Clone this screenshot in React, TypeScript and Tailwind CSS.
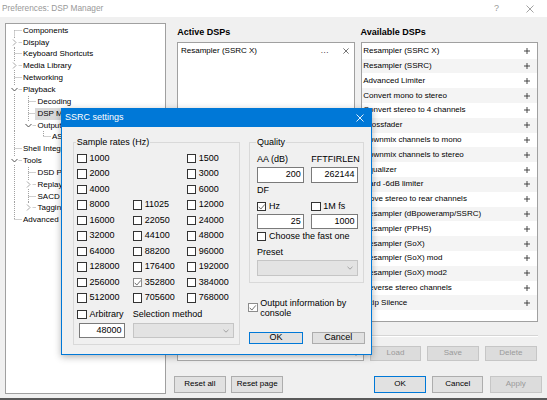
import React from "react";

type Conn = "F" | "T" | "L" | "I" | " ";

interface TreeItem {
  label: string;
  cols: Conn[];
  toggle?: "open" | "closed";
  selected?: boolean;
}

const TREE: TreeItem[] = [
  { label: "Components", cols: ["F"] },
  { label: "Display", cols: ["T"], toggle: "closed" },
  { label: "Keyboard Shortcuts", cols: ["T"] },
  { label: "Media Library", cols: ["T"], toggle: "closed" },
  { label: "Networking", cols: ["T"] },
  { label: "Playback", cols: ["T"], toggle: "open" },
  { label: "Decoding", cols: ["I", "T"] },
  { label: "DSP Manager", cols: ["I", "T"], selected: true },
  { label: "Output", cols: ["I", "L"], toggle: "open" },
  { label: "ASIO", cols: ["I", " ", "L"] },
  { label: "Shell Integration", cols: ["T"] },
  { label: "Tools", cols: ["T"], toggle: "open" },
  { label: "DSD Processor", cols: ["I", "T"] },
  { label: "ReplayGain", cols: ["I", "T"], toggle: "closed" },
  { label: "SACD", cols: ["I", "T"] },
  { label: "Tagging", cols: ["I", "L"], toggle: "closed" },
  { label: "Advanced", cols: ["L"] },
];

const AVAILABLE = [
  "Resampler (SSRC X)",
  "Resampler (SSRC)",
  "Advanced Limiter",
  "Convert mono to stereo",
  "Convert stereo to 4 channels",
  "Crossfader",
  "Downmix channels to mono",
  "Downmix channels to stereo",
  "Equalizer",
  "Hard -6dB limiter",
  "Move stereo to rear channels",
  "Resampler (dBpoweramp/SSRC)",
  "Resampler (PPHS)",
  "Resampler (SoX)",
  "Resampler (SoX) mod",
  "Resampler (SoX) mod2",
  "Reverse stereo channels",
  "Skip Silence",
];

// sample rate grid, null = empty cell
const RATES: (string | null)[][] = [
  ["1000", null, "1500"],
  ["2000", null, "3000"],
  ["4000", null, "6000"],
  ["8000", "11025", "12000"],
  ["16000", "22050", "24000"],
  ["32000", "44100", "48000"],
  ["64000", "88200", "96000"],
  ["128000", "176400", "192000"],
  ["256000", "352800", "384000"],
  ["512000", "705600", "768000"],
];

const COL = 14.5;
const ROW = 11.85;

function Connectors({ cols, toggle }: { cols: Conn[]; toggle?: "open" | "closed" }) {
  const w = COL * cols.length;
  const mid = Math.floor(ROW / 2) + 0.5;
  const cx = Math.floor((cols.length - 1) * COL + 7) + 0.5;
  return (
    <svg width={w} height={ROW} viewBox={`0 0 ${w} ${ROW}`} className="shrink-0">
      <g stroke="#a0a0a0" strokeWidth="1" strokeDasharray="1 1" fill="none">
        {cols.map((c, i) => {
          if (c === " ") return null;
          const x = Math.floor(i * COL + 7) + 0.5;
          const top = c === "F" ? mid : 0;
          const bottom = c === "L" ? mid : ROW;
          return (
            <g key={i}>
              <line x1={x} y1={top} x2={x} y2={bottom} />
              {c !== "I" && <line x1={x} y1={mid} x2={(i + 1) * COL} y2={mid} />}
            </g>
          );
        })}
      </g>
      {toggle && <rect x={cx - 4} y={mid - 4} width="8" height="8" fill="#ffffff" />}
      {toggle === "closed" && (
        <path d={`M${cx - 1.5} ${mid - 3} L${cx + 1.5} ${mid} L${cx - 1.5} ${mid + 3}`} stroke="#a6a6a6" fill="none" />
      )}
      {toggle === "open" && (
        <path d={`M${cx - 3} ${mid - 1.5} L${cx} ${mid + 1.5} L${cx + 3} ${mid - 1.5}`} stroke="#505050" fill="none" />
      )}
    </svg>
  );
}

function Tree() {
  return (
    <div className="ml-[5px] mt-[6px] w-[161px] h-[371px] bg-white border border-[#a0a0a0] pt-[0.8px] pl-[1px] overflow-hidden">
      {TREE.map((t) => (
        <div key={t.label} className="flex items-center h-[11.85px] leading-[11.85px]">
          <Connectors cols={t.cols} toggle={t.toggle} />
          {t.selected ? (
            <span className="whitespace-nowrap bg-[#d9d9d9] -ml-[1.5px] px-[3px]">{t.label}</span>
          ) : (
            <span className="whitespace-nowrap pl-[1.5px]">{t.label}</span>
          )}
        </div>
      ))}
    </div>
  );
}

function CloseGlyph({ color, size = 8 }: { color: string; size?: number }) {
  return (
    <svg width={size} height={size} viewBox="0 0 8 8">
      <path d="M0.5 0.5 L7.5 7.5 M7.5 0.5 L0.5 7.5" stroke={color} strokeWidth="0.9" fill="none" />
    </svg>
  );
}

function Plus() {
  return (
    <svg width="6" height="6" viewBox="0 0 6 6">
      <path d="M3 0 V6 M0 3 H6" stroke="#333333" strokeWidth="0.9" fill="none" />
    </svg>
  );
}

function Chevron({ color }: { color: string }) {
  return (
    <svg width="6" height="4" viewBox="0 0 6 4">
      <path d="M0.5 0.8 L3 3.2 L5.5 0.8" stroke={color} strokeWidth="0.9" fill="none" />
    </svg>
  );
}

function Button({
  label,
  w,
  kind = "normal",
}: {
  label: string;
  w: string;
  kind?: "normal" | "default" | "disabled";
}) {
  const look =
    kind === "default"
      ? "bg-[#e1e1e1] border-[#0078d7] text-black"
      : kind === "disabled"
        ? "bg-[#dcdcdc] border-[#c6c6c6] text-[#9a9a9a]"
        : "bg-[#e1e1e1] border-[#adadad] text-black";
  return (
    <div className={`${w} h-full shrink-0 border flex items-center justify-center ${look}`}>{label}</div>
  );
}

function RightPanel() {
  return (
    <div className="flex flex-col w-[381px]">
      {/* headers */}
      <div className="flex mt-[10.5px] h-[11px] items-center ml-[11.3px] text-[9px] font-bold">
        <div className="w-[183.3px]">Active DSPs</div>
        <div>Available DSPs</div>
      </div>

      {/* lists */}
      <div className="flex mt-[3.8px] ml-[10.7px] h-[279.7px] gap-[6px]">
        <div className="w-[178.3px] h-full bg-white border border-[#a0a0a0] pt-[0.6px]">
          <div className="flex items-center h-[14.8px] pl-[3.3px] pr-[5px]">
            <span className="flex-1">Resampler (SSRC X)</span>
            <span className="tracking-[0.5px] mr-[14px]">...</span>
            <CloseGlyph color="#333333" size={6} />
          </div>
        </div>
        <div className="w-[176.7px] h-full bg-white border border-[#a0a0a0] pt-[0.6px]">
          {AVAILABLE.map((d, i) => (
            <div
              key={d}
              className={`flex items-center justify-between h-[14.8px] pl-[1.3px] pr-[6.5px] whitespace-nowrap ${
                i % 2 === 1 ? "bg-[#f4f4f4]" : "bg-white"
              }`}
            >
              <span>{d}</span>
              <Plus />
            </div>
          ))}
        </div>
      </div>

      {/* separator */}
      <div className="mt-[13px] ml-[11px] w-[360.7px] h-[2px] border-t border-[#d5d5d5] border-b-white border-b" />

      {/* preset row */}
      <div className="flex mt-[9px] ml-[10.7px] h-[15px] items-center">
        <div className="w-[187.3px] h-[14.5px] mt-[0.7px] bg-white border border-[#adadad] flex items-center justify-end pr-[4px]">
          <Chevron color="#333333" />
        </div>
        <div className="ml-[6px] h-full flex gap-[6px]">
          <Button label="Load" w="w-[51px]" kind="disabled" />
          <Button label="Save" w="w-[51.7px]" kind="disabled" />
          <Button label="Delete" w="w-[52.3px]" kind="disabled" />
        </div>
      </div>

      {/* bottom buttons */}
      <div className="flex mt-[15px] ml-[8px] h-[16.7px]">
        <Button label="Reset all" w="w-[51.7px]" />
        <div className="ml-[5.3px] h-full">
          <Button label="Reset page" w="w-[52.3px]" />
        </div>
        <div className="ml-[91px] h-full flex gap-[6.6px]">
          <Button label="OK" w="w-[51.4px]" kind="default" />
          <Button label="Cancel" w="w-[51px]" />
          <Button label="Apply" w="w-[51.7px]" kind="disabled" />
        </div>
      </div>
    </div>
  );
}

function Check({ label, checked, dim }: { label?: string; checked?: boolean; dim?: boolean }) {
  return (
    <div className="flex items-center whitespace-nowrap">
      <span
        className={`w-[9.5px] h-[9.5px] shrink-0 border bg-white flex items-center justify-center ${
          dim ? "border-[#8c8c8c]" : "border-[#333333]"
        }`}
      >
        {checked && (
          <svg width="8" height="8" viewBox="0 0 8 8">
            <path d="M0.8 3.8 L3 6.2 L7.3 1.2" stroke="#555555" strokeWidth="0.9" fill="none" />
          </svg>
        )}
      </span>
      {label && <span className="ml-[2.6px]">{label}</span>}
    </div>
  );
}

function Field({ value, w }: { value: string; w: string }) {
  return (
    <div className={`${w} h-full bg-white border border-[#7a7a7a] flex items-center justify-end pr-[2.5px]`}>
      {value}
    </div>
  );
}

function DisabledCombo({ w }: { w: string }) {
  return (
    <div className={`${w} h-full bg-[#e3e3e3] border border-[#c5c5c5] flex items-center justify-end pr-[4px]`}>
      <Chevron color="#9a9a9a" />
    </div>
  );
}

function SsrcDialog() {
  return (
    <div className="absolute left-[61px] top-[108px] w-[311px] h-[247px] border border-[#0078d7] bg-[#f0f0f0] flex flex-col text-[9px] shadow-[0_2px_7px_rgba(0,0,0,0.3)]">
      <div className="h-[18px] bg-[#0078d7] flex items-center justify-between pl-[3px] pr-[7px] text-white">
        <span>SSRC settings</span>
        <CloseGlyph color="#ffffff" size={8} />
      </div>

      <div className="flex pt-[15px] pl-[10.7px]">
        {/* Sample rates */}
        <div className="relative w-[167.3px] h-[203px] border border-[#d9d9d9] pt-[7.5px] pl-[3.6px]">
          <span className="absolute -top-[6px] left-[2px] px-[1px] bg-[#f0f0f0] leading-[11px]">Sample rates (Hz)</span>
          <div className="grid grid-cols-[55.4px_54px_54px] auto-rows-[15.56px]">
            {RATES.flat().map((r, i) => (
              <div key={i} className="flex items-center">
                {r && <Check label={r} checked={r === "352800"} dim={r === "352800"} />}
              </div>
            ))}
          </div>
          <div className="grid grid-cols-[55.4px_1fr] h-[15.56px] mt-[1px] items-center">
            <Check label="Arbitrary" />
            <span>Selection method</span>
          </div>
          <div className="flex h-[15px] mt-[0.5px]">
            <div className="w-[55.4px] pl-[1.7px] h-full">
              <Field value="48000" w="w-[46px]" />
            </div>
            <DisabledCombo w="w-[101.6px]" />
          </div>
        </div>

        {/* right column */}
        <div className="ml-[8.7px] w-[116.3px] flex flex-col">
          <div className="relative w-[115.6px] h-[140.7px] border border-[#d9d9d9] pt-[11.5px] pl-[7.3px]">
            <span className="absolute -top-[6px] left-[6.3px] px-[1px] bg-[#f0f0f0] leading-[11px]">Quality</span>
            <div className="flex h-[11px] items-center">
              <span className="w-[54.3px]">AA (dB)</span>
              <span>FFTFIRLEN</span>
            </div>
            <div className="flex h-[15.7px] mt-[1.5px]">
              <div className="w-[54.3px] h-full">
                <Field value="200" w="w-[47.3px]" />
              </div>
              <Field value="262144" w="w-[46.7px]" />
            </div>
            <div className="h-[11px] mt-[2.8px] flex items-center">DF</div>
            <div className="flex h-[12px] mt-[4.2px] items-center">
              <div className="w-[54.3px]">
                <Check label="Hz" checked />
              </div>
              <Check label="1M fs" />
            </div>
            <div className="flex h-[15px] mt-[1.6px]">
              <div className="w-[54.3px] h-full">
                <Field value="25" w="w-[47.3px]" />
              </div>
              <Field value="1000" w="w-[46.7px]" />
            </div>
            <div className="h-[12px] mt-[1.4px] flex items-center">
              <Check label="Choose the fast one" />
            </div>
            <div className="h-[11px] mt-[4.5px] flex items-center">Preset</div>
            <div className="h-[16px] mt-[1.8px]">
              <DisabledCombo w="w-[101px]" />
            </div>
          </div>

          <div className="flex items-center mt-[15px] leading-[10px] -ml-[0.4px]">
            <Check checked dim />
            <span className="ml-[2.4px]">
              Output information by
              <br />
              console
            </span>
          </div>

          <div className="flex mt-[14px] h-[12.7px] ml-[0.6px] gap-[9px]">
            <Button label="OK" w="w-[53.4px]" kind="default" />
            <Button label="Cancel" w="w-[53.3px]" />
          </div>
        </div>
      </div>
    </div>
  );
}

export default function App() {
  return (
    <div className="relative w-[547px] h-[400px] overflow-hidden bg-[#f0f0f0] flex flex-col font-['Liberation_Sans',Arial,sans-serif] text-[8px] text-black">
      <div className="h-[17px] shrink-0 bg-white flex items-center pl-[2px] pr-[13px] text-[8.3px] text-[#999999]">
        <span className="flex-1">Preferences: DSP Manager</span>
        <span className="text-[9px] mr-[27px]">?</span>
        <CloseGlyph color="#999999" size={8} />
      </div>

      <div className="flex flex-1 min-h-0">
        <Tree />
        <RightPanel />
      </div>

      <div className="h-[2px] shrink-0 bg-[#595959]" />

      <SsrcDialog />
    </div>
  );
}
